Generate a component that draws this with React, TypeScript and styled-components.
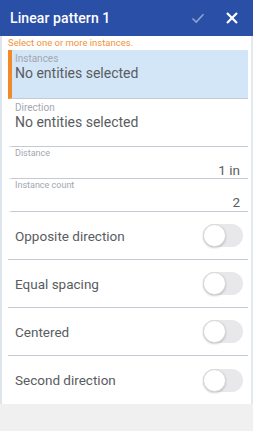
import styled, { createGlobalStyle } from "styled-components";

const GlobalStyle = createGlobalStyle`
  html, body {
    margin: 0;
    padding: 0;
    background: #ffffff;
  }
  body {
    font-family: Roboto, "Noto Sans", "Liberation Sans", sans-serif;
    -webkit-font-smoothing: antialiased;
  }
`;

const Page = styled.div`
  display: flex;
  flex-direction: column;
  width: 253px;
  height: 431px;
  overflow: hidden;
`;

const Header = styled.div`
  display: flex;
  align-items: center;
  height: 36px;
  padding: 0 0 0 10px;
  background: #2a4fa6;
  flex-shrink: 0;
`;

const Title = styled.div`
  flex: 1;
  color: #ffffff;
  font-size: 14px;
  font-weight: 500;
  letter-spacing: 0.1px;
`;

const HeaderButton = styled.button`
  display: flex;
  align-items: center;
  justify-content: center;
  width: 34px;
  height: 36px;
  padding: 0;
  border: none;
  background: none;
`;

const Panel = styled.div`
  flex: 1;
  display: flex;
  flex-direction: column;
  border-left: 2px solid #dde6ef;
  border-right: 2px solid #e4e9ee;
  padding: 0 3px 0 6px;
`;

const Hint = styled.div`
  color: #f2913a;
  font-size: 9.5px;
  line-height: 14px;
  height: 14px;
`;

const Field = styled.div<{ $active?: boolean; $height: number }>`
  display: flex;
  flex-direction: column;
  height: ${(p) => p.$height}px;
  box-sizing: border-box;
  border-bottom: 1px solid #c5cad2;
  background: ${(p) => (p.$active ? "#d3e6f7" : "transparent")};
  border-left: 4px solid ${(p) => (p.$active ? "#f08a2c" : "transparent")};
  padding: 0 8px 0 3px;
`;

const Label = styled.div<{ $small?: boolean }>`
  color: #a2a7ae;
  font-size: ${(p) => (p.$small ? 9 : 10)}px;
  line-height: ${(p) => (p.$small ? 11 : 12)}px;
  padding-top: ${(p) => (p.$small ? 1 : 3)}px;
`;

const Value = styled.div<{ $right?: boolean }>`
  color: #595c61;
  font-size: ${(p) => (p.$right ? 13.5 : 14)}px;
  line-height: ${(p) => (p.$right ? 18 : 16)}px;
  text-align: ${(p) => (p.$right ? "right" : "left")};
  margin-top: ${(p) => (p.$right ? 2 : 0)}px;
`;

const ToggleRow = styled.div<{ $last?: boolean }>`
  display: flex;
  align-items: center;
  justify-content: space-between;
  height: 48px;
  box-sizing: border-box;
  padding: 0 5px 0 7px;
  border-bottom: ${(p) => (p.$last ? "none" : "1px solid #c5cad2")};
`;

const ToggleLabel = styled.div`
  color: #595c61;
  font-size: 13.5px;
`;

const Track = styled.div`
  position: relative;
  width: 40px;
  height: 23px;
  border-radius: 12px;
  background: #e8e8ea;
`;

const Knob = styled.div`
  position: absolute;
  left: 0;
  top: 0;
  width: 23px;
  height: 23px;
  box-sizing: border-box;
  border-radius: 50%;
  background: #ffffff;
  border: 1px solid #d6d6d8;
  box-shadow: 0 1px 2px rgba(0, 0, 0, 0.18);
`;

const Footer = styled.div`
  height: 28px;
  flex-shrink: 0;
  background: #f0f0f0;
`;

const Toggle = () => (
  <Track>
    <Knob />
  </Track>
);

const toggles = ["Opposite direction", "Equal spacing", "Centered", "Second direction"];

export default function App() {
  return (
    <>
      <GlobalStyle />
      <Page>
        <Header>
          <Title>Linear pattern 1</Title>
          <HeaderButton aria-label="Accept">
            <svg width="16" height="16" viewBox="0 0 16 16">
              <path d="M2.5 8.5 L6.2 12 L13.5 4.2" fill="none" stroke="#8ea3d2" strokeWidth="1.6" />
            </svg>
          </HeaderButton>
          <HeaderButton aria-label="Close" style={{ marginRight: 4 }}>
            <svg width="14" height="14" viewBox="0 0 14 14">
              <path d="M2 2 L12 12 M12 2 L2 12" fill="none" stroke="#ffffff" strokeWidth="2.2" />
            </svg>
          </HeaderButton>
        </Header>
        <Panel>
          <Hint>Select one or more instances.</Hint>
          <Field $active $height={49}>
            <Label>Instances</Label>
            <Value>No entities selected</Value>
          </Field>
          <Field $height={48}>
            <Label>Direction</Label>
            <Value>No entities selected</Value>
          </Field>
          <Field $height={32}>
            <Label $small>Distance</Label>
            <Value $right>1 in</Value>
          </Field>
          <Field $height={33}>
            <Label $small>Instance count</Label>
            <Value $right>2</Value>
          </Field>
          {toggles.map((t, i) => (
            <ToggleRow key={t} $last={i === toggles.length - 1}>
              <ToggleLabel>{t}</ToggleLabel>
              <Toggle />
            </ToggleRow>
          ))}
        </Panel>
        <Footer />
      </Page>
    </>
  );
}
